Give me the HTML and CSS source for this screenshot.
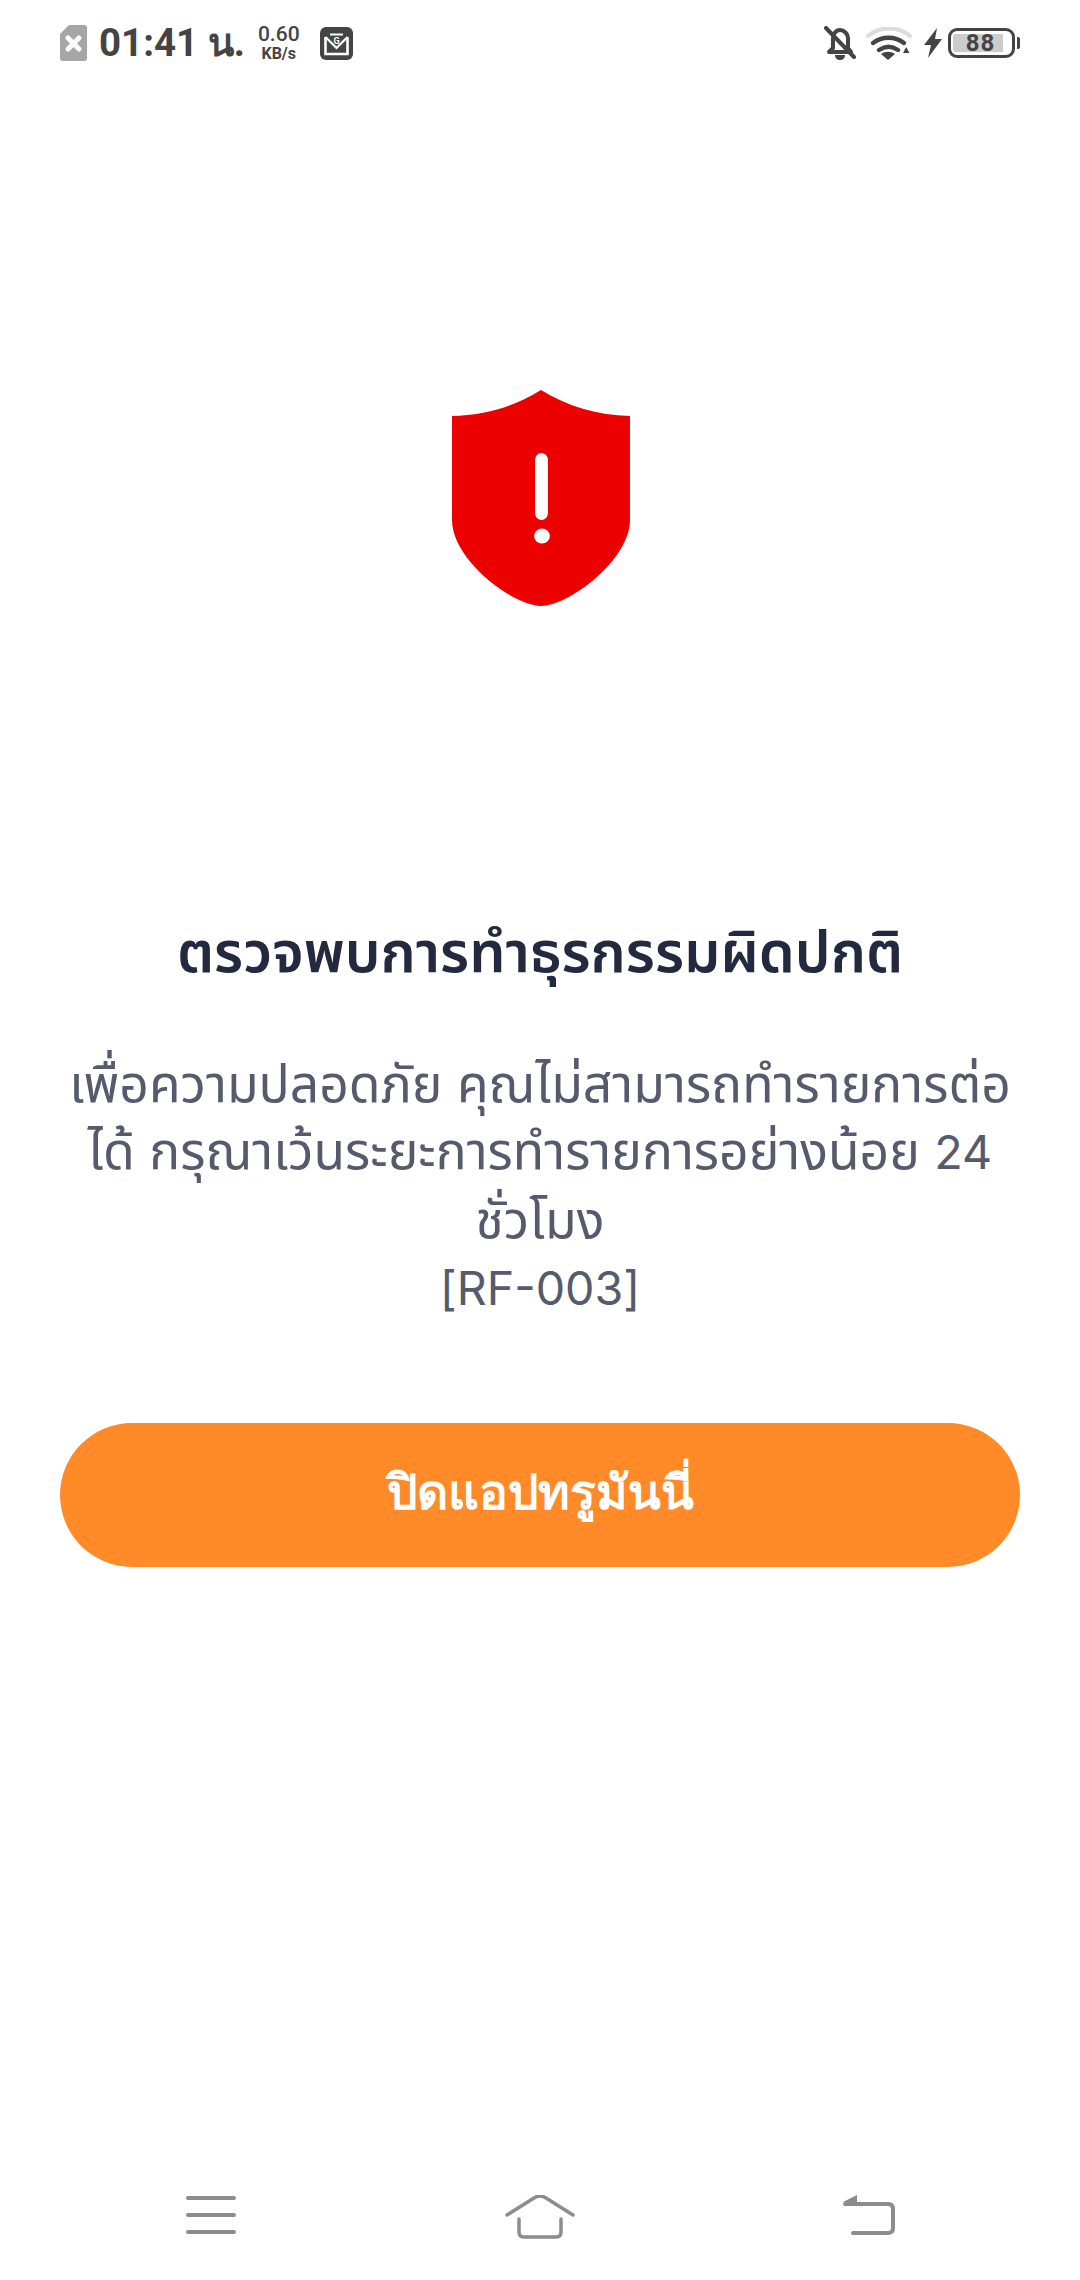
FILE: index.html
```html
<!DOCTYPE html>
<html lang="th">
<head>
<meta charset="utf-8">
<title>ตรวจพบการทำธุรกรรมผิดปกติ</title>
<link rel="stylesheet" href="styles.css">
</head>
<body>
<div class="app">
  <header class="status">
    <div class="status-left">
      <svg class="sim" viewBox="0 0 27 36"><path fill="#a6a6a6" d="M9 0h15a3 3 0 0 1 3 3v30a3 3 0 0 1-3 3H3a3 3 0 0 1-3-3V9z"/><path stroke="#fff" stroke-width="5" stroke-linecap="round" d="M8 13l11 11M19 13L8 24"/></svg>
      <span class="time">01:41 น.</span>
      <span class="speed"><span class="speed-num">0.60</span><span class="speed-unit">KB/s</span></span>
      <svg class="mail" viewBox="0 0 33 33"><rect width="33" height="33" rx="6" fill="#444"/><path fill="none" stroke="#fff" stroke-width="2.600" d="M5.500 10v17h22V10"/><path fill="none" stroke="#fff" stroke-width="2.200" d="M10 7.500h13M5.500 10l11 11 11-11"/><text class="mail-g" x="16.500" y="17">G</text></svg>
    </div>
    <div class="status-right">
      <svg class="bell" viewBox="0 0 32 34"><path fill="none" stroke="#444" stroke-width="4" stroke-linejoin="round" d="M9 12c0-4 3-8 7-8s8 4 8 8v10l3 4H5l4-4z"/><path fill="#444" d="M11 29h10c0 3-2 5-5 5s-5-2-5-5z"/><path stroke="#444" stroke-width="4" stroke-linecap="round" d="M2 2l28 29"/></svg>
      <svg class="wifi" viewBox="0 0 46 33"><path fill="none" stroke="#dcdcdc" stroke-width="4" stroke-linecap="round" d="M2 9C14-1 32-1 44 9"/><path fill="none" stroke="#444" stroke-width="4.400" stroke-linecap="round" d="M7 16c9-7 22-7 31 0M13 23c6-4 13-4 19 0"/><path fill="#444" d="M15 27c4-3 10-3 14 0l-7 6zM37 26l3.200-6 3.300 6z"/></svg>
      <svg class="bolt" viewBox="0 0 18 30"><path fill="#444" d="M13 0L0 17h7l-3 13L18 11h-7z"/></svg>
      <div class="battery">
        <div class="battery-body"><div class="battery-fill"><span class="battery-num">88</span></div></div>
        <div class="battery-tip"></div>
      </div>
    </div>
  </header>

  <main class="main">
    <svg class="shield" viewBox="0 0 180 216" preserveAspectRatio="none"><path fill="#ec0000" d="M90 0C62 17 33 25 0 26V130C0 170 62 216 90 216C118 216 180 170 180 130V26C147 25 118 17 90 0Z"/><rect x="84" y="63" width="13" height="67" rx="6.500" fill="#fff"/><ellipse cx="91" cy="146" rx="8" ry="7.500" fill="#fff"/></svg>
    <h1 class="title">ตรวจพบการทำธุรกรรมผิดปกติ</h1>
    <p class="message">เพื่อความปลอดภัย คุณไม่สามารถทำรายการต่อ<br>ได้ กรุณาเว้นระยะการทำรายการอย่างน้อย <span class="latin">24</span><br>ชั่วโมง<br><span class="latin">[RF-003]</span></p>
    <button class="close-btn" type="button">ปิดแอปทรูมันนี่</button>
  </main>

  <nav class="navbar">
    <svg class="nav-menu" viewBox="0 0 50 40"><path stroke="#8c8c8c" stroke-width="4" stroke-linecap="round" d="M2 6h46M2 23h46M2 40h46" transform="translate(0 -4)"/></svg>
    <svg class="nav-home" viewBox="0 0 70 44"><path fill="none" stroke="#8c8c8c" stroke-width="3.500" stroke-linecap="round" stroke-linejoin="round" d="M2 20L29 3q6-4 12 0L68 20M14 24v13q0 5 5 5h32q5 0 5-5V24"/></svg>
    <svg class="nav-back" viewBox="0 0 52 42"><path fill="#8c8c8c" d="M14 0v7H0z"/><path fill="none" stroke="#8c8c8c" stroke-width="4" stroke-linecap="round" d="M2 9h43q5 0 5 5v19q0 5-5 5H10"/></svg>
  </nav>
</div>
</body>
</html>
```
FILE: styles.css
```css
* { box-sizing: border-box; }
html, body { margin: 0; padding: 0; background: #fff; }
body { font-family: Inter, "Noto Sans", "Noto Sans Thai", "Liberation Sans", sans-serif; }
.app { width: 1080px; height: 2280px; display: flex; flex-direction: column; overflow: hidden; }

.status { height: 86px; flex: none; display: flex; justify-content: space-between; align-items: center; padding: 0 60px; color: #444; font-family: Roboto, "Noto Sans", sans-serif; }
.status-left, .status-right { display: flex; align-items: center; }
.sim { width: 27px; height: 36px; margin-right: 12px; }
.time { font-size: 38.500px; font-weight: 700; line-height: 44px; white-space: nowrap; margin-right: 13px; }
.speed { display: flex; flex-direction: column; align-items: center; margin-right: 20px; font-weight: 500; }
.speed-num { font-size: 21px; line-height: 21px; }
.speed-unit { font-size: 16px; line-height: 17px; font-weight: 700; }
.mail { width: 33px; height: 33px; }
.mail-g { font-size: 9px; font-weight: 700; fill: #fff; text-anchor: middle; }
.bell { width: 32px; height: 34px; margin-right: 10px; }
.wifi { width: 46px; height: 33px; margin-right: 12px; }
.bolt { width: 18px; height: 30px; margin-right: 6px; }
.battery { display: flex; align-items: center; }
.battery-body { width: 67px; height: 30px; border: 3px solid #444; border-radius: 9px; padding: 3px 9px 3px 2px; display: flex; }
.battery-fill { flex: 1; background: #ccc; border-radius: 3px 0 0 3px; display: flex; align-items: center; justify-content: center; padding-left: 5px; }
.battery-num { font-size: 24px; font-weight: 700; letter-spacing: 1px; line-height: 18px; }
.battery-tip { width: 3px; height: 12px; background: #444; border-radius: 0 2px 2px 0; margin-left: 2px; }

.main { flex: 1; display: flex; flex-direction: column; align-items: center; padding: 304px 60px 0; }
.shield { width: 178px; height: 216px; margin-left: 2px; display: block; flex: none; }
.title { margin: 309px 0 0; font-size: 57.400px; line-height: 72px; font-weight: 600; color: #232a3f; text-align: center; white-space: nowrap; }
.message { margin: 63px -20px 0; font-size: 51.600px; line-height: 67px; color: #555a6c; text-align: center; font-weight: 400; white-space: nowrap; }
.latin { font-size: 46.600px; font-weight: 400; }
.close-btn { margin-top: 101px; width: 960px; height: 144px; flex: none; border: 0; border-radius: 72px; background: #ff8a27; color: #fff; padding: 0 0 6px; font: 600 48px Inter, "Noto Sans", sans-serif; }

.navbar { height: 120px; flex: none; display: flex; justify-content: space-between; align-items: flex-start; padding: 35px 185px 0 186px; }
.nav-menu { width: 50px; height: 40px; margin-top: 1px; overflow: visible; }
.nav-home { width: 70px; height: 44px; }
.nav-back { width: 52px; height: 42px; }
```
